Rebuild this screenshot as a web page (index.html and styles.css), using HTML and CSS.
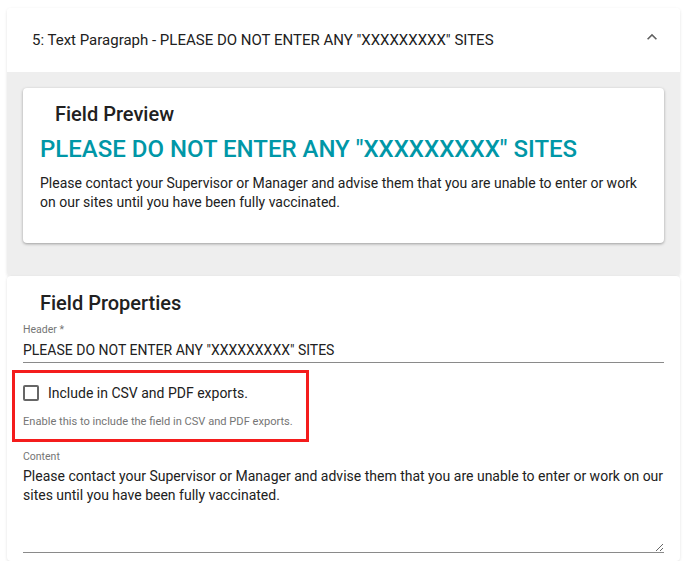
FILE: index.html
```html
<!DOCTYPE html>
<html>
<head>
  <title>Text Paragraph Field</title>
  <link rel="stylesheet" href="styles.css">
</head>
<body>

  <div class="panel">
    <div class="panel-head">
      <span>5: Text Paragraph - PLEASE DO NOT ENTER ANY "XXXXXXXXX" SITES</span>
      <!-- expand_less -->
      <svg class="chevron" viewBox="0 0 24 24" width="20" height="20">
        <path d="M12 8l-6 6 1.41 1.41L12 10.83l4.59 4.58L18 14z" fill="#616161"/>
      </svg>
    </div>

    <div class="panel-body">
      <div class="preview-card">
        <h3 class="card-title">Field Preview</h3>
        <h2 class="preview-heading">PLEASE DO NOT ENTER ANY "XXXXXXXXX" SITES</h2>
        <p class="preview-text">Please contact your Supervisor or Manager and advise them that you are unable to enter or work on our sites until you have been fully vaccinated.</p>
      </div>
    </div>
  </div>

  <div class="props-card">
    <h3 class="card-title props-title">Field Properties</h3>

    <div class="field">
      <label class="field-label" for="header">Header *</label>
      <input class="field-input" id="header" type="text" value='PLEASE DO NOT ENTER ANY "XXXXXXXXX" SITES'>
    </div>

    <!-- highlighted option -->
    <div class="export-box">
      <label class="check-row">
        <span class="checkbox"></span>
        <span>Include in CSV and PDF exports.</span>
      </label>
      <div class="helper">Enable this to include the field in CSV and PDF exports.</div>
    </div>

    <div class="field content-field">
      <label class="field-label" for="content">Content</label>
      <textarea class="field-area" id="content">Please contact your Supervisor or Manager and advise them that you are unable to enter or work on our sites until you have been fully vaccinated.</textarea>
    </div>
  </div>

</body>
</html>
```

FILE: styles.css
```css
body {
  margin: 0;
  padding: 8px 8px 0 7px;
  background: #fff;
  font-family: Roboto, 'Noto Sans', sans-serif;
  color: #212121;
}

.panel {
  border-radius: 4px;
  box-shadow: 0 1px 3px rgba(0,0,0,0.12);
  overflow: hidden;
}

.panel-head {
  height: 64px;
  display: flex;
  align-items: center;
  justify-content: space-between;
  padding: 0 18px 0 25px;
  font-size: 15px;
  background: #fff;
}

.chevron {
  margin-top: -6px;
}

.panel-body {
  background: #eeeeee;
  padding: 16px 16px 33px 16px;
}

.preview-card {
  background: #fff;
  border-radius: 4px;
  box-shadow: 0 1px 3px rgba(0,0,0,0.35);
  padding: 14px 17px 31px 17px;
}

.card-title {
  margin: 0;
  font-size: 20px;
  line-height: 24px;
  font-weight: 500;
  padding-left: 15px;
}

.preview-heading {
  margin: 9px 0 0 0;
  font-size: 24px;
  line-height: 28px;
  font-weight: 500;
  color: #0097a7;
}

.preview-text {
  margin: 11px 0 0 0;
  font-size: 14px;
  line-height: 19px;
}

.props-card {
  background: #fff;
  border-radius: 4px;
  box-shadow: 0 1px 3px rgba(0,0,0,0.12);
  padding: 15px 16px 0 16px;
  height: 270px;
}

.props-title {
  padding-left: 17px;
}

.field {
  margin-top: 8px;
  display: flex;
  flex-direction: column;
}

.field-label {
  font-size: 10.5px;
  line-height: 13px;
  color: #757575;
}

.field-input {
  border: none;
  border-bottom: 1px solid #8a8a8a;
  padding: 5px 0 3px 0;
  font-family: inherit;
  font-size: 14px;
  line-height: 18px;
  color: #212121;
  outline: none;
}

.export-box {
  border: 3px solid #f41c1c;
  width: 283px;
  margin: 7px 0 0 -11px;
  padding: 12px 0 11px 8px;
}

.check-row {
  display: flex;
  align-items: center;
  font-size: 14px;
  line-height: 16px;
}

.checkbox {
  width: 12px;
  height: 12px;
  border: 2px solid #666;
  border-radius: 2px;
  margin-right: 9px;
}

.helper {
  margin-top: 14px;
  font-size: 11.1px;
  line-height: 13px;
  color: #757575;
}

.content-field {
  margin-top: 8px;
}

.field-area {
  border: none;
  border-bottom: 1px solid #8a8a8a;
  padding: 4px 0 0 0;
  margin-top: 0;
  height: 85px;
  font-family: inherit;
  font-size: 14px;
  line-height: 19px;
  color: #212121;
  outline: none;
  resize: vertical;
}
```
